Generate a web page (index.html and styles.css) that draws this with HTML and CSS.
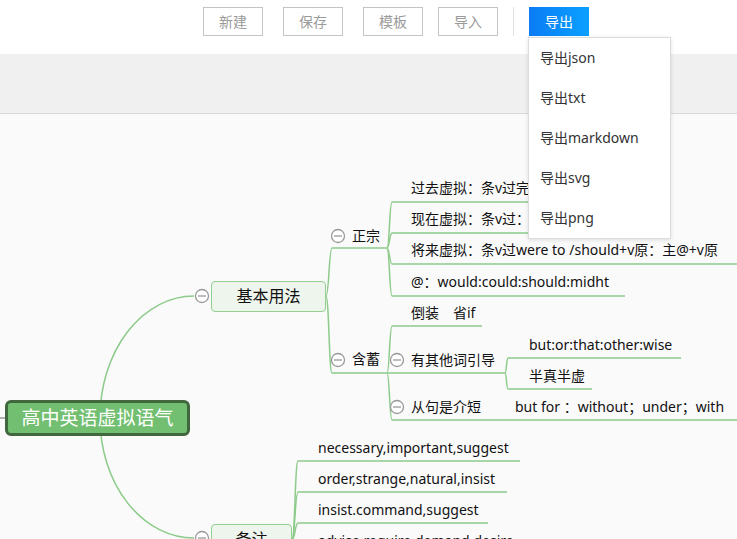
FILE: index.html
```html
<!DOCTYPE html>
<html lang="zh-CN">

<head>
    <meta charset="UTF-8">
    <title>高中英语虚拟语气</title>
    <link rel="stylesheet" href="styles.css">
</head>

<body>

    <header class="toolbar">
        <button class="btn">新建</button>
        <button class="btn">保存</button>
        <button class="btn">模板</button>
        <button class="btn btn-import">导入</button>
        <span class="sep"></span>
        <button class="btn btn-export">导出</button>
    </header>

    <div class="band"></div>

    <main class="canvas">
        <svg class="lines" width="737" height="425" viewBox="0 0 737 425">
            <g fill="none" stroke="#8ccb8a" stroke-width="1.5">
                <!-- root arcs -->
                <path d="M100,304 A94,122 0 0 1 194,182" />
                <path d="M100,304 A94,120 0 0 0 194,424" />
                <line x1="0" y1="304" x2="5" y2="304" stroke="#999" />

                <!-- 基本用法 -->
                <path d="M326,182 C329,182 329,134 332,134 L387,134" />
                <path d="M326,182 C329,182 329,259 332,259 L387,259" />

                <!-- 正宗 -->
                <path d="M387,134 C389.5,134 389.5,88 392,88 L650,88" />
                <path d="M387,134 C389.5,134 389.5,119 392,119 L640,119" />
                <path d="M387,134 C389.5,134 389.5,150 392,150 L740,150" />
                <path d="M387,134 C389.5,134 389.5,182 392,182 L625,182" />

                <!-- 含蓄 -->
                <path d="M387,259 C389.5,259 389.5,212 392,212 L482,212" />
                <path d="M387,259 C389.5,259 389.5,259 392,259 L505,259" />
                <path d="M387,259 C389.5,259 389.5,306 392,306 L505,306" />

                <!-- 有其他词引导 -->
                <path d="M505,259 C506.5,259 506.5,244 508,244 L681,244" />
                <path d="M505,259 C506.5,259 506.5,275 508,275 L592,275" />

                <!-- 从句是介短 -->
                <path d="M505,306 L740,306" />

                <!-- 备注 -->
                <path d="M292,426 C295,426 295,347 298,347 L520,347" />
                <path d="M292,426 C295,426 295,378 298,378 L507,378" />
                <path d="M292,426 C295,426 295,409 298,409 L488,409" />
                <path d="M292,426 C295,426 295,440 298,440 L560,440" />
            </g>

            <g class="toggles" fill="#fff" stroke="#999" stroke-width="1.3">
                <circle cx="202" cy="182" r="6.5" />
                <line x1="198" y1="182" x2="206" y2="182" />
                <circle cx="202" cy="424" r="6.5" />
                <line x1="198" y1="424" x2="206" y2="424" />
                <circle cx="338" cy="122" r="6.5" />
                <line x1="334" y1="122" x2="342" y2="122" />
                <circle cx="338" cy="246" r="6.5" />
                <line x1="334" y1="246" x2="342" y2="246" />
                <circle cx="397" cy="246" r="6.5" />
                <line x1="393" y1="246" x2="401" y2="246" />
                <circle cx="397" cy="293" r="6.5" />
                <line x1="393" y1="293" x2="401" y2="293" />
            </g>
        </svg>

        <div class="node root" style="left: 5px; top: 286px;">高中英语虚拟语气</div>
        <div class="node main" style="left: 211px; top: 167px; width: 115px;">基本用法</div>
        <div class="node main" style="left: 211px; top: 410px; width: 81px;">备注</div>

        <div class="node sub" style="left: 352px; top: 112px;">正宗</div>
        <div class="node sub" style="left: 352px; top: 235px;">含蓄</div>

        <div class="node sub" style="left: 411px; top: 64px;">过去虚拟：条v过完：主@+have done</div>
        <div class="node sub" style="left: 411px; top: 95px;">现在虚拟：条v过：主@+v原</div>
        <div class="node sub" style="left: 411px; top: 126px;">将来虚拟：条v过were to /should+v原：主@+v原</div>
        <div class="node sub" style="left: 411px; top: 158px;">@：would:could:should:midht</div>

        <div class="node sub" style="left: 411px; top: 189px;">倒装　省if</div>
        <div class="node sub" style="left: 411px; top: 236px;">有其他词引导</div>
        <div class="node sub" style="left: 411px; top: 283px;">从句是介短</div>

        <div class="node sub" style="left: 529px; top: 221px;">but:or:that:other:wise</div>
        <div class="node sub" style="left: 529px; top: 252px;">半真半虚</div>
        <div class="node sub" style="left: 515px; top: 283px;">but for ：without；under；with</div>

        <div class="node sub" style="left: 318px; top: 324px;">necessary,important,suggest</div>
        <div class="node sub" style="left: 318px; top: 355px;">order,strange,natural,insist</div>
        <div class="node sub" style="left: 318px; top: 386px;">insist.command,suggest</div>
        <div class="node sub" style="left: 318px; top: 417px;">advise,require,demand,desire</div>
    </main>

    <ul class="menu">
        <li>导出json</li>
        <li>导出txt</li>
        <li>导出markdown</li>
        <li>导出svg</li>
        <li>导出png</li>
    </ul>

</body>

</html>
```

FILE: styles.css
```css
body {
    margin: 0;
    font-family: "Noto Sans", "Noto Sans CJK SC", sans-serif;
    background-color: #fafafa;
    color: #111;
    width: 737px;
    height: 539px;
    overflow: hidden;
    position: relative;
}

.toolbar {
    height: 54px;
    background-color: #fff;
    display: flex;
    align-items: flex-start;
    padding: 7px 0 0 203px;
    box-sizing: border-box;
}

.btn {
    width: 60px;
    height: 29px;
    margin-right: 20px;
    padding: 0;
    border: 1px solid #c4c4c4;
    background-color: #fff;
    color: #9a9a9a;
    font-family: inherit;
    font-size: 14px;
    line-height: 27px;
}

.btn-import {
    margin-left: -5px;
    margin-right: 15px;
}

.sep {
    width: 1px;
    height: 29px;
    background-color: #e2e2e2;
    margin-right: 15px;
}

.btn-export {
    border: none;
    line-height: 29px;
    color: #fff;
    background: linear-gradient(to right, #0a7cf5, #0aa0ff);
}

.band {
    height: 59px;
    background-color: #f0f0f0;
    border-bottom: 1px solid #d9d9d9;
}

.canvas {
    position: relative;
    height: 425px;
    overflow: hidden;
    background-color: #fafafa;
}

.lines {
    position: absolute;
    left: 0;
    top: 0;
}

.node {
    position: absolute;
    white-space: nowrap;
    font-size: 14px;
    line-height: 20px;
}

.root {
    width: 185px;
    height: 36px;
    box-sizing: border-box;
    border: 3px solid #41673f;
    border-radius: 6px;
    background-color: #73bf72;
    color: #fff;
    font-size: 19px;
    line-height: 30px;
    text-align: center;
}

.main {
    height: 31px;
    box-sizing: border-box;
    border: 1px solid #93cf91;
    border-radius: 4px;
    background-color: #eef5ec;
    font-size: 16px;
    line-height: 29px;
    text-align: center;
}

.menu {
    position: absolute;
    left: 528px;
    top: 37px;
    width: 143px;
    margin: 0;
    padding: 0;
    list-style: none;
    background-color: #fff;
    border: 1px solid #dcdcdc;
    box-shadow: 0 1px 4px rgba(0, 0, 0, 0.12);
    box-sizing: border-box;
}

.menu li {
    height: 40px;
    line-height: 40px;
    padding-left: 11px;
    font-size: 14px;
    color: #333;
}
```
